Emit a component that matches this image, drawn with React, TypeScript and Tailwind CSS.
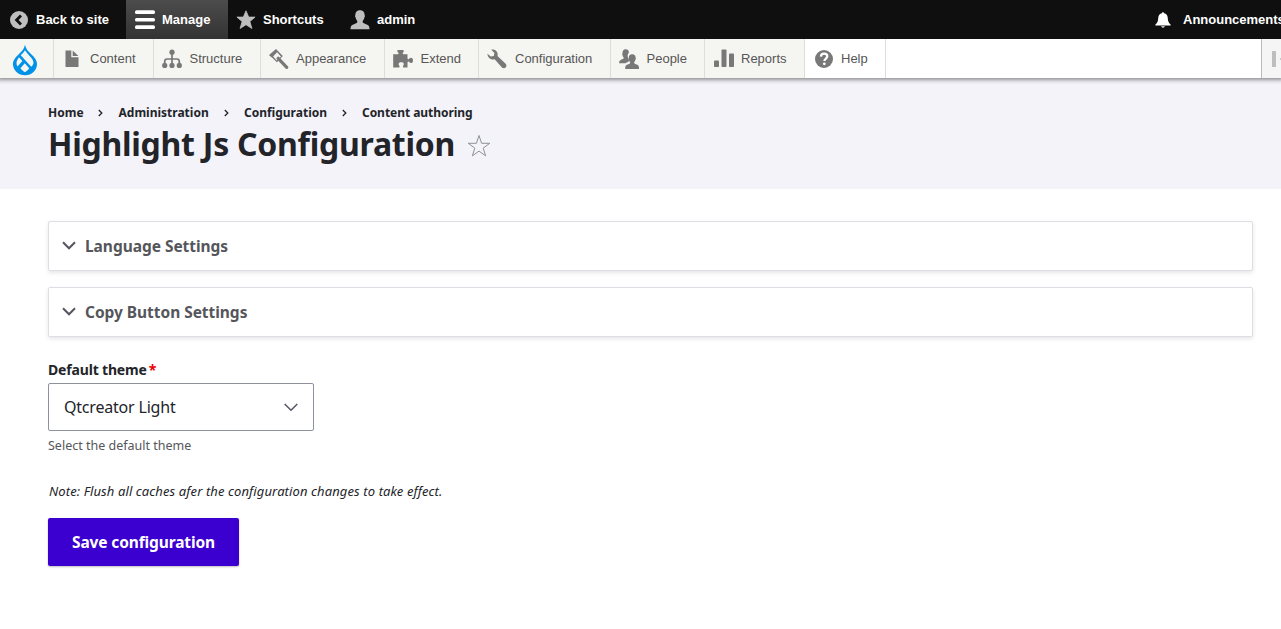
import React from 'react';

function BackIcon() {
    return (
        <svg viewBox="0 0 20 20" className="size-5" fill="none">
            <circle cx="10" cy="10" r="9" fill="#bebebe" />
            <path d="M12 5.6L7.6 10L12 14.4" stroke="#0f0f0f" strokeWidth="2.8" />
        </svg>
    );
}

function MenuIcon() {
    return (
        <svg viewBox="0 0 20 20" className="size-5" fill="#fff">
            <rect y="0.300" width="20" height="3.700" rx="1.6" />
            <rect y="7.900" width="20" height="3.700" rx="1.6" />
            <rect y="15.300" width="20" height="3.700" rx="1.6" />
        </svg>
    );
}

function StarIcon() {
    return (
        <svg viewBox="0 0 20 20" className="size-5" fill="#bebebe" stroke="#bebebe" strokeWidth=".8" strokeLinejoin="round">
            <path d="M10 .8l2.700 6.300h6.400l-5.200 4.400 2 7L10 14.700l-5.900 3.800 2-7L.9 7.100h6.400z" />
        </svg>
    );
}

function PersonIcon({ className, fill }: { className: string; fill: string }) {
    return (
        <svg viewBox="0 0 20 20" className={className} fill={fill}>
            <path d="M10 .3c3.300 0 4.700 2.200 4.600 4.800.5.300.5 1.700-.2 2.500-.3 1.500-.8 2.300-1.500 3.100-.5.800-.3 1.700.5 2.300l4.300 2c1.200.6 1.800 1.800 1.800 4.300H.5c0-2.500.6-3.700 1.800-4.300l4.300-2c.8-.6 1-1.500.5-2.300-.7-.8-1.200-1.600-1.500-3.100-.7-.8-.7-2.200-.2-2.500C5.300 2.500 6.700.3 10 .3z" />
        </svg>
    );
}

function BellIcon() {
    return (
        <svg viewBox="0 0 16 16" className="size-4" fill="#fff">
            <path d="M8 .2c.7 0 1.100.5 1.100 1.100 2.300.6 3.400 2.100 3.600 4.300.2 3.600.8 5.200 3 7.200v.7H.3v-.7c2.200-2 2.800-3.600 3-7.200.2-2.200 1.300-3.700 3.600-4.300C6.900.7 7.300.2 8 .2z" />
            <path d="M6.200 14.300h3.600c-.2.900-.9 1.400-1.800 1.400s-1.600-.5-1.800-1.400z" />
        </svg>
    );
}

function DropletLogo() {
    return (
        <svg viewBox="0 0 26 32" className="h-8 w-[26px]">
            <path d="M13 .8C12.300 5 9.800 7.200 7 10c-3.200 3-6 6-6 10.200a12 11 0 0 0 24 0c0-4.200-2.800-7.200-6-10.200-2.800-2.800-5.300-5-6-9.200z" fill="#0091e8" />
            <g fill="#f5f5f1">
                <path d="M13 6.200C11.900 8 10.300 9.700 8.700 11.300l10.500 11.500c2.500-1.600 3-4.600 1.400-7C19 12.700 15 9.700 13 6.200z" />
                <path d="M7 13.200l3.400 3.700-4.900 5.500C3.600 19.600 4.400 16.400 7 13.200z" />
                <path d="M12.800 19.300l4.400 4.900c-.8 1.400-2.200 2.700-4.300 4-2.100-1.100-3.500-2.400-4.500-3.900z" />
            </g>
        </svg>
    );
}

function FileIcon() {
    return (
        <svg viewBox="0 0 20 20" className="size-5" fill="#787878">
            <path d="M3.500 1.500h5.800v6.700h7.200v9.700h-13z" />
            <path d="M10.700 1.500l5.700 5.500h-5.700z" />
        </svg>
    );
}

function StructureIcon() {
    return (
        <svg viewBox="0 0 20 20" className="size-5" fill="#787878">
            <circle cx="10" cy="3.200" r="2.600" />
            <circle cx="2.700" cy="16.400" r="2.600" />
            <circle cx="10" cy="16.400" r="2.600" />
            <circle cx="17.300" cy="16.400" r="2.600" />
            <path d="M10 4v12M2.700 16v-3.500q0-2.500 2.500-2.500h9.600q2.500 0 2.500 2.500V16" fill="none" stroke="#787878" strokeWidth="1.700" />
        </svg>
    );
}

function AppearanceIcon() {
    return (
        <svg viewBox="0 0 20 20" className="size-5" fill="#787878">
            <path d="M0 5.900L7 .1l6.800 7-5.900 6.200-4.100-4.100C2.600 8.200 1.200 7.400 0 5.900z" />
            <path d="M8.100 3.200l3.900 4.200-4.200 4-3.700-4z" fill="#f5f5f1" />
            <path d="M9.200 9.300l8.500 9" stroke="#787878" strokeWidth="3.200" strokeLinecap="round" />
        </svg>
    );
}

function PuzzleIcon() {
    return (
        <svg viewBox="0 0 20 20" className="size-5" fill="#787878">
            <path d="M.2 5.200h4.500c1 0 1.100-.8.700-1.500C4.300 2.700 3.600 1 5.300.9h4.400c1.700.1 1.200 1.800.2 2.800-.5.700-.2 1.500.7 1.500h3.900v4.100c0 .9.900 1.100 1.500.7 1.600-2.300 4-1.400 4 1.400s-2.400 3.500-4 1.300c-.6-.4-1.500-.2-1.500.7v5.100h-3.800c-.9 0-1-.8-.6-1.500 1.500-2.200.5-3.700-1.800-3.700s-3.500 1.600-1.900 3.700c.4.700.3 1.500-.6 1.500H.2V9.300z" />
        </svg>
    );
}

function WrenchIcon() {
    return (
        <svg viewBox="0 0 20 20" className="size-5" fill="#787878">
            <path d="M4.300.7C8.400-.2 11.500 3 10.500 7.100l8.400 8c1.700 2.500-1.200 5.200-3.700 3.600l-7.600-8.400C4.300 11.500.5 8.900.4 4.800l3.400 2.700 3-.5.600-3.100z" />
        </svg>
    );
}

function PeopleIcon() {
    return (
        <svg viewBox="0 0 20 20" className="size-5" fill="#787878">
            <path d="M6.700.2c2.300 0 3.200 1.400 3.200 3.500-.9.900-1.400 2-1.200 3.600.2 1.700.8 3 1.700 4-.2 1.500-2.400 2-4 3H.1c0-2.100.5-2.900 1.700-3.400 1.600-.7 3-1.100 3.100-2.100-.8-1-1.200-1.700-1.400-2.900-.4-.5-.4-1.500 0-1.700C3.400 2 4.300.2 6.700.2z" />
            <path d="M13.200 5.200c2.500 0 3.500 1.600 3.400 3.700.4.300.3 1.300-.2 1.900-.2 1.100-.6 1.700-1.200 2.400-.3 1.300.5 1.500 3.200 2.600 1.200.5 1.700 1.700 1.600 4.100H6.200c0-2.400.5-3.600 1.700-4.100 2.700-1.100 3.500-1.300 3.200-2.600-.6-.7-1-1.300-1.200-2.400-.5-.6-.5-1.600-.1-1.900-.1-2.100.9-3.700 3.400-3.700z" />
        </svg>
    );
}

function ReportsIcon() {
    return (
        <svg viewBox="0 0 20 20" className="ml-[1px] size-5" fill="#787878">
            <rect x="0" y="11.500" width="5" height="6.500" rx=".8" />
            <rect x="7.500" y=".5" width="5" height="17.500" rx=".8" />
            <rect x="15" y="4.500" width="5" height="13.500" rx=".8" />
        </svg>
    );
}

function HelpIcon() {
    return (
        <svg viewBox="0 0 20 20" className="size-5" fill="none">
            <circle cx="10" cy="10" r="9" fill="#787878" />
            <path d="M6.900 7.600c.1-2 1.300-3 3.200-3s3.200 1 3.200 2.700c0 2.200-2.900 2.300-2.900 4.700" stroke="#fff" strokeWidth="2.300" />
            <circle cx="10.300" cy="14.800" r="1.400" fill="#fff" />
        </svg>
    );
}

const trayItems = [
    { label: 'Content', icon: <FileIcon />, width: 'w-[100px]', gap: 'gap-2' },
    { label: 'Structure', icon: <StructureIcon />, width: 'w-[107px]', gap: 'gap-[7.5px]' },
    { label: 'Appearance', icon: <AppearanceIcon />, width: 'w-[124px]', gap: 'gap-[7px]' },
    { label: 'Extend', icon: <PuzzleIcon />, width: 'w-[94px]', gap: 'gap-[7.5px]' },
    { label: 'Configuration', icon: <WrenchIcon />, width: 'w-[132px]', gap: 'gap-2' },
    { label: 'People', icon: <PeopleIcon />, width: 'w-[94px]', gap: 'gap-[7.5px]' },
    { label: 'Reports', icon: <ReportsIcon />, width: 'w-[100px]', gap: 'gap-[7px]' },
];

function Toolbar() {
    return (
        <nav className="flex h-[39px] overflow-hidden bg-[#0f0f0f] font-['Liberation_Sans',sans-serif] text-[13px] font-bold text-white">
            <a className="flex w-[126px] shrink-0 items-center gap-[7px] pl-[9px]">
                <BackIcon />
                Back to site
            </a>
            <a className="flex w-[102px] shrink-0 items-center gap-[7px] bg-linear-to-b from-[#4c4c4c] to-[#333] pl-[9px]">
                <MenuIcon />
                Manage
            </a>
            <a className="flex w-[113px] shrink-0 items-center gap-[7px] pl-2">
                <StarIcon />
                Shortcuts
            </a>
            <a className="flex shrink-0 items-center gap-[7px] pl-[9px]">
                <PersonIcon className="size-5" fill="#bebebe" />
                admin
            </a>
            <a className="ml-auto flex w-[127px] shrink-0 items-center gap-3 pl-[1px] whitespace-nowrap">
                <span className="shrink-0">
                    <BellIcon />
                </span>
                <span className="w-[98px] shrink-0">Announcements</span>
            </a>
        </nav>
    );
}

function Tray() {
    return (
        <nav className="relative flex h-[39px] bg-white font-['Liberation_Sans',sans-serif] text-[13px] text-[#565656] shadow-[0_0_4px_2px_rgba(0,0,0,0.42)] [clip-path:inset(0_0_-8px_0)]">
            <a className="flex w-[54px] justify-center border-r border-[#ddd] bg-[#f5f5f1] pt-[5px] pr-[3px]">
                <DropletLogo />
            </a>
            {trayItems.map((item) => (
                <a key={item.label} className={`flex items-center border-r border-[#ddd] bg-[#f5f5f1] pl-2 ${item.gap} ${item.width}`}>
                    {item.icon}
                    {item.label}
                </a>
            ))}
            <a className="flex w-[81px] items-center gap-[7px] border-r border-[#ddd] pl-[9px]">
                <HelpIcon />
                Help
            </a>
            <button className="ml-auto flex w-5 items-center overflow-hidden border-l border-[#bbb] bg-[#f5f5f5] pl-[10px]">
                <svg viewBox="0 0 9 16" className="h-4 w-[9px] shrink-0" fill="#bebebe">
                    <rect width="4" height="16" rx=".5" />
                    <path d="M7.500 8l1.500-1.300v2.600z" />
                </svg>
            </button>
        </nav>
    );
}

function Breadcrumb() {
    return (
        <div className="flex h-5 items-center text-[12px] font-bold">
            <span className="w-[70px]">Home</span>
            <Separator />
            <span className="w-[126px] pl-[.5px]">Administration</span>
            <Separator />
            <span className="w-[118px]">Configuration</span>
            <Separator />
            <span className="tracking-[-0.04px]">Content authoring</span>
        </div>
    );
}

function Separator() {
    return (
        <svg viewBox="0 0 5 8" className="-ml-5 mr-[15px] h-2 w-[5px] shrink-0" fill="none" stroke="#232429" strokeWidth="1.300">
            <path d="M.8 1L3.800 4 .8 7" />
        </svg>
    );
}

function Details({ title }: { title: string }) {
    return (
        <div className="flex h-[50px] items-center rounded-[2px] border border-[#dedfe4] bg-white pl-[13px] shadow-[0_2px_4px_rgba(0,0,0,0.1)]">
            <svg viewBox="0 0 14 9" className="mr-[9px] mb-[1px] h-[9px] w-[14px]" fill="none" stroke="#545560" strokeWidth="2">
                <path d="M1 1.300l6 6 6-6" />
            </svg>
            <span className="pt-[1px] text-[15.500px] font-bold tracking-[-0.04px] text-[#55565b]">{title}</span>
        </div>
    );
}

export default function App() {
    return (
        <div className="h-[629px] overflow-hidden bg-white font-['Noto_Sans',sans-serif] text-[#232429]">
            <Toolbar />
            <Tray />
            <header className="h-[111px] bg-[#f3f3f9] px-12 pt-[25px]">
                <Breadcrumb />
                <div className="flex h-[42px] items-center">
                    <h1 className="w-[419px] whitespace-nowrap text-[32px] font-bold tracking-[-0.26px]">Highlight Js Configuration</h1>
                    <svg viewBox="0 0 24 24" className="mt-[3px] size-6" fill="none" stroke="#8e929c" strokeWidth="1">
                        <path d="M12 1.500l2.600 7.800h8.200l-6.600 4.800 2.500 7.800-6.700-4.800-6.700 4.800 2.500-7.800-6.600-4.800h8.200z" />
                    </svg>
                </div>
            </header>
            <main className="flex flex-col pt-8 pr-7 pl-12">
                <div className="flex flex-col gap-4">
                    <Details title="Language Settings" />
                    <Details title="Copy Button Settings" />
                </div>
                <label className="mt-[21px] mb-[3px] flex h-[22px] items-center text-[14px] font-bold">
                    <span className="tracking-[-0.17px]">Default theme</span>
                    <span className="ml-[2px] text-[#e00]">*</span>
                </label>
                <div className="flex h-12 w-[266px] items-center justify-between rounded-[2px] border border-[#8e929c] pr-[15px] pl-[15px]">
                    <span className="text-[16px] tracking-[-0.2px]">Qtcreator Light</span>
                    <svg viewBox="0 0 14 9" className="h-[9px] w-[14px]" fill="none" stroke="#545560" strokeWidth="1.500">
                        <path d="M.7 1l6.300 6.300L13.300 1" />
                    </svg>
                </div>
                <p className="mt-[5px] h-5 text-[12.500px] leading-5 text-[#55565b]">Select the default theme</p>
                <p className="mt-[25px] h-5 pl-[1px] text-[13px] leading-5 italic">
                    <span className="tracking-[0.11px]">Note: Flush all caches afer the configuration changes to take effect.</span>
                </p>
                <button className="mt-[17px] flex h-12 w-[191px] items-center justify-center rounded-[2px] bg-[#3b00d0] pt-[1px] text-[15.500px] font-bold text-white shadow-[0_1px_2px_rgba(0,0,0,0.25)]">
                    <span className="tracking-[-0.13px]">Save configuration</span>
                </button>
            </main>
        </div>
    );
}
